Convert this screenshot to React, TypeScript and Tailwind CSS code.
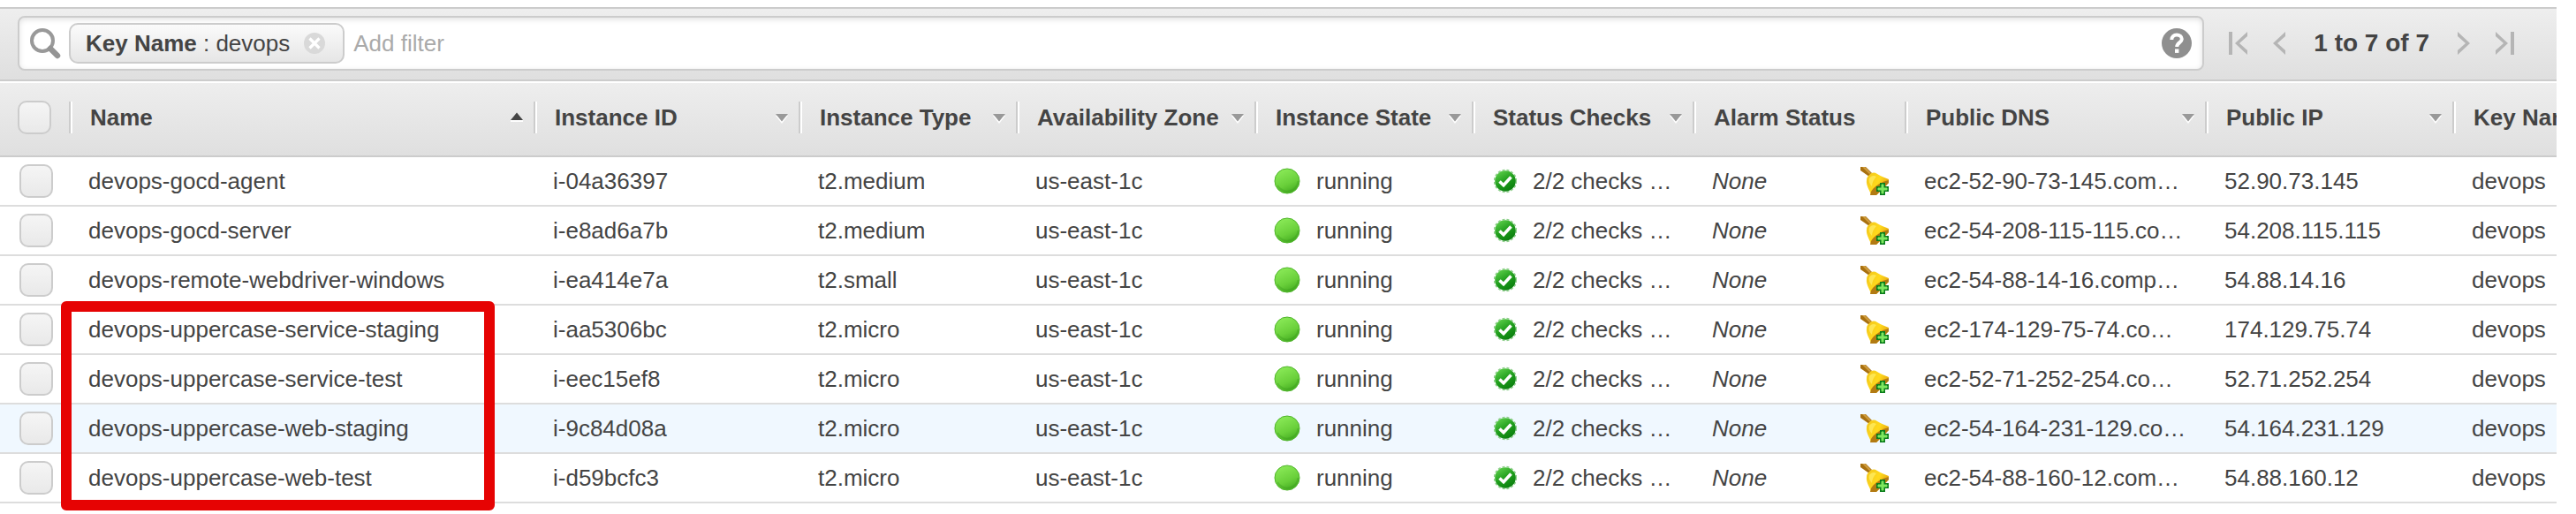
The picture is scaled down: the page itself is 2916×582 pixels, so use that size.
import React from "react";

type Sort = "asc" | "idle" | "none";

interface Column {
  label: string;
  sort: Sort;
  width: string;
}

const columns: Column[] = [
  { label: "Name", sort: "asc", width: "w-[526px]" },
  { label: "Instance ID", sort: "idle", width: "w-[300px]" },
  { label: "Instance Type", sort: "idle", width: "w-[246px]" },
  { label: "Availability Zone", sort: "idle", width: "w-[270px]" },
  { label: "Instance State", sort: "idle", width: "w-[246px]" },
  { label: "Status Checks", sort: "idle", width: "w-[250px]" },
  { label: "Alarm Status", sort: "none", width: "w-[240px]" },
  { label: "Public DNS", sort: "idle", width: "w-[340px]" },
  { label: "Public IP", sort: "idle", width: "w-[280px]" },
  { label: "Key Name", sort: "none", width: "" },
];

interface Instance {
  name: string;
  id: string;
  type: string;
  dns: string;
  ip: string;
  hovered?: boolean;
}

const instances: Instance[] = [
  { name: "devops-gocd-agent", id: "i-04a36397", type: "t2.medium", dns: "ec2-52-90-73-145.com…", ip: "52.90.73.145" },
  { name: "devops-gocd-server", id: "i-e8ad6a7b", type: "t2.medium", dns: "ec2-54-208-115-115.co…", ip: "54.208.115.115" },
  { name: "devops-remote-webdriver-windows", id: "i-ea414e7a", type: "t2.small", dns: "ec2-54-88-14-16.comp…", ip: "54.88.14.16" },
  { name: "devops-uppercase-service-staging", id: "i-aa5306bc", type: "t2.micro", dns: "ec2-174-129-75-74.co…", ip: "174.129.75.74" },
  { name: "devops-uppercase-service-test", id: "i-eec15ef8", type: "t2.micro", dns: "ec2-52-71-252-254.co…", ip: "52.71.252.254" },
  { name: "devops-uppercase-web-staging", id: "i-9c84d08a", type: "t2.micro", dns: "ec2-54-164-231-129.co…", ip: "54.164.231.129", hovered: true },
  { name: "devops-uppercase-web-test", id: "i-d59bcfc3", type: "t2.micro", dns: "ec2-54-88-160-12.com…", ip: "54.88.160.12" },
];

function Checkbox({ label }: { label: string }) {
  return (
    <input
      type="checkbox"
      aria-label={label}
      className="block size-[38px] appearance-none rounded-[10px] border-2 border-[#cccccc] bg-linear-to-b from-[#f5f5f5] to-[#e9e9e9] checked:bg-[#9cc3e6]"
    />
  );
}

function SortArrow({ sort }: { sort: Sort }) {
  if (sort === "none") return null;
  return (
    <svg width="16" height="14" viewBox="0 0 16 14" className="shrink-0" aria-hidden="true">
      {sort === "asc" ? (
        <>
          <path d="M1 10H15V12H1z" fill="#fff" />
          <path d="M8 1.500L15 10H1z" fill="#444" />
        </>
      ) : (
        <>
          <path d="M1 5H15L8 14z" fill="#fff" />
          <path d="M1 3H15L8 11.500z" fill="#999" />
        </>
      )}
    </svg>
  );
}

function SearchIcon() {
  return (
    <svg width="36" height="38" viewBox="0 0 36 38" className="shrink-0" aria-hidden="true">
      <circle cx="14" cy="16" r="12" fill="none" stroke="#999" strokeWidth="4" />
      <path d="M23 25L31 33" stroke="#949494" strokeWidth="6.500" strokeLinecap="round" />
    </svg>
  );
}

function RemoveIcon() {
  return (
    <svg width="24" height="24" viewBox="0 0 24 24" className="block" aria-hidden="true">
      <circle cx="12" cy="12" r="12" fill="#d9d9d9" />
      <path d="M6.500 6.500L17.500 17.500M17.500 6.500L6.500 17.500" stroke="#fff" strokeWidth="3.200" />
    </svg>
  );
}

function HelpIcon() {
  return (
    <svg width="34" height="34" viewBox="0 0 34 34" className="block" aria-hidden="true">
      <circle cx="17" cy="17" r="17" fill="#8f8f8f" />
      <path
        d="M11.300 13C11.300 9.300 13.700 7.600 17 7.600C20.300 7.600 22.800 9.400 22.800 12.300C22.800 16 17.200 16.300 17.200 21"
        fill="none"
        stroke="#fff"
        strokeWidth="4"
      />
      <rect x="15" y="23.500" width="4.400" height="4.400" fill="#fff" />
    </svg>
  );
}

function PageArrow({ end, flip }: { end?: boolean; flip?: boolean }) {
  return (
    <svg
      width="22"
      height="28"
      viewBox="0 0 22 28"
      className={flip ? "block -scale-x-100" : "block"}
      fill="#b5b5b5"
      aria-hidden="true"
    >
      {end && <path d="M0 1H4V27H0z" />}
      <path d={end ? "M21 1V6L12 14L21 22V27L7 14z" : "M18 1V6L9 14L18 22V27L4 14z"} />
    </svg>
  );
}

function RunningIcon() {
  return (
    <svg width="30" height="30" viewBox="0 0 30 30" className="shrink-0" aria-hidden="true">
      <circle cx="15" cy="15" r="14" fill="url(#orb)" stroke="#4fb52b" strokeWidth="1" />
      <path d="M4 20A12.500 12.500 0 0 0 27.500 15" fill="none" stroke="#3a9c1c" strokeOpacity="0.350" strokeWidth="2" />
    </svg>
  );
}

function CheckIcon() {
  return (
    <svg width="26" height="28" viewBox="0 0 26 28" className="shrink-0" aria-hidden="true">
      <circle cx="13" cy="14" r="12.500" fill="none" stroke="#8fd08c" strokeWidth="1.500" strokeDasharray="3 2" />
      <circle cx="13" cy="14" r="11.800" fill="url(#seal)" />
      <path d="M6.500 14.500L11 18.800L19.500 9.500" fill="none" stroke="#fff" strokeWidth="3.600" />
    </svg>
  );
}

function BellIcon() {
  return (
    <svg width="32" height="32" viewBox="0 0 32 32" className="block" aria-hidden="true">
      <path d="M0 0H6L13 7L10 11L0 4z" fill="#a8700f" />
      <path d="M2 0H5L12 7L10 8z" fill="#cf9c3d" />
      <path d="M10 9C13 6 16 6 19 8C24 11 28 12 32 14V18L18 32H12C11 27 6 21 7 15C7 12 8 11 10 9z" fill="url(#brass)" />
      <path d="M12 28C14 24 20 18 32 15V18L18 32H11z" fill="#b27a12" />
      <path d="M10 13C12 10 15 9 18 11C15 14 13 18 13 22C10 19 9 16 10 13z" fill="#fff06a" fillOpacity="0.700" />
      <path d="M22 18H28V22H32V28H28V32H22V28H18V22H22z" fill="#0b7d1c" />
      <path d="M24 20H26V24H30V26H26V30H24V26H20V24H24z" fill="#7ee860" stroke="#7ee860" strokeWidth="1" />
    </svg>
  );
}

function SharedGradients() {
  return (
    <svg width="0" height="0" className="absolute" aria-hidden="true">
      <defs>
        <linearGradient id="orb" x1="0.300" y1="0" x2="0.750" y2="1">
          <stop offset="0" stopColor="#8bea58" />
          <stop offset="0.600" stopColor="#69cf3a" />
          <stop offset="1" stopColor="#3fa81d" />
        </linearGradient>
        <linearGradient id="seal" x1="0.200" y1="0" x2="0.800" y2="1">
          <stop offset="0" stopColor="#5fd04c" />
          <stop offset="0.500" stopColor="#1f9d1c" />
          <stop offset="1" stopColor="#077a0c" />
        </linearGradient>
        <linearGradient id="brass" x1="0" y1="0.200" x2="1" y2="0.700">
          <stop offset="0" stopColor="#f3c81c" />
          <stop offset="0.500" stopColor="#ffd91c" />
          <stop offset="1" stopColor="#e09a0a" />
        </linearGradient>
      </defs>
    </svg>
  );
}

function FilterBar() {
  return (
    <div className="flex items-center border-y-2 border-[#cccccc] bg-linear-to-b from-[#eeeeee] to-[#dfdfdf] pt-2 pr-12 pb-2.5 pl-5">
      <div className="flex h-[62px] min-w-0 flex-1 items-center rounded-lg border-2 border-[#cccccc] bg-white pr-3 pl-3 shadow-[inset_0_2px_6px_rgba(0,0,0,0.12)]">
        <SearchIcon />
        <div className="ml-2 flex h-[46px] shrink-0 items-center rounded-[10px] border-2 border-[#cccccc] bg-linear-to-b from-[#fbfbfb] to-[#e6e6e6] pr-5 pl-[17px] whitespace-pre">
          <span className="font-bold">Key Name</span>
          <span> : devops</span>
          <button type="button" aria-label="Remove filter" className="ml-4">
            <RemoveIcon />
          </button>
        </div>
        <input
          type="text"
          aria-label="Add filter"
          placeholder="Add filter"
          className="ml-2.5 min-w-0 flex-1 bg-transparent outline-none placeholder:text-[#aaaaaa]"
        />
        <button type="button" aria-label="Help">
          <HelpIcon />
        </button>
      </div>
      <nav aria-label="Pages" className="ml-7 flex items-center">
        <button type="button" aria-label="First page">
          <PageArrow end />
        </button>
        <button type="button" aria-label="Previous page" className="ml-6">
          <PageArrow />
        </button>
        <span className="mx-7 text-[28px] font-bold whitespace-nowrap">1 to 7 of 7</span>
        <button type="button" aria-label="Next page" className="mr-6">
          <PageArrow flip />
        </button>
        <button type="button" aria-label="Last page">
          <PageArrow end flip />
        </button>
      </nav>
    </div>
  );
}

const headCell =
  "h-[86px] overflow-hidden border-t-2 border-b-2 border-t-white border-b-[#cccccc] bg-linear-to-b from-[#eeeeee] to-[#dfdfdf] bg-origin-border p-0 pb-1 text-left font-bold";
const bodyCell = "h-14 overflow-hidden border-b-2 border-[#dddddd] p-0 pl-[22px] whitespace-nowrap";

function InstanceRow({ item }: { item: Instance }) {
  return (
    <tr className={item.hovered ? "bg-[#f0f8ff]" : "bg-white"}>
      <td className="h-14 border-b-2 border-[#dddddd] p-0 pl-[22px]">
        <Checkbox label={"Select " + item.name} />
      </td>
      <td className={bodyCell}>{item.name}</td>
      <td className={bodyCell}>{item.id}</td>
      <td className={bodyCell}>{item.type}</td>
      <td className={bodyCell}>us-east-1c</td>
      <td className={bodyCell}>
        <div className="flex items-center gap-[18px]">
          <RunningIcon />
          <span>running</span>
        </div>
      </td>
      <td className={bodyCell}>
        <div className="flex items-center gap-[18px] pl-[3px]">
          <CheckIcon />
          <span>2/2 checks …</span>
        </div>
      </td>
      <td className={bodyCell}>
        <div className="flex items-center justify-between pr-[18px]">
          <span className="italic">None</span>
          <button type="button" aria-label={"Add alarm for " + item.name}>
            <BellIcon />
          </button>
        </div>
      </td>
      <td className={bodyCell}>{item.dns}</td>
      <td className={bodyCell}>{item.ip}</td>
      <td className={bodyCell}>devops</td>
    </tr>
  );
}

export default function App() {
  return (
    <main className="bg-white pt-2 pr-[22px] font-['Liberation_Sans',Arial,sans-serif] text-[26px] leading-8 text-[#444444]">
      <SharedGradients />
      <FilterBar />
      <div className="relative overflow-hidden pb-3">
        <table className="w-full table-fixed border-separate border-spacing-0">
          <colgroup>
            <col className="w-[78px]" />
            {columns.map((c) => (
              <col key={c.label} className={c.width} />
            ))}
          </colgroup>
          <thead>
            <tr>
              <th className={headCell + " pl-5"}>
                <Checkbox label="Select all instances" />
              </th>
              {columns.map((c) => (
                <th key={c.label} scope="col" className={headCell}>
                  <div className="flex h-9 items-center border-l-2 border-[#cccccc]">
                    <button
                      type="button"
                      className="flex h-9 w-full items-center justify-between border-l-2 border-white pr-[11px] pl-5 font-bold whitespace-nowrap"
                    >
                      {c.label}
                      <SortArrow sort={c.sort} />
                    </button>
                  </div>
                </th>
              ))}
            </tr>
          </thead>
          <tbody>
            {instances.map((item) => (
              <InstanceRow key={item.id} item={item} />
            ))}
          </tbody>
        </table>
        <div className="pointer-events-none absolute top-[249px] left-[69px] h-[237px] w-[491px] rounded-md border-12 border-[#e60303]" />
      </div>
    </main>
  );
}
